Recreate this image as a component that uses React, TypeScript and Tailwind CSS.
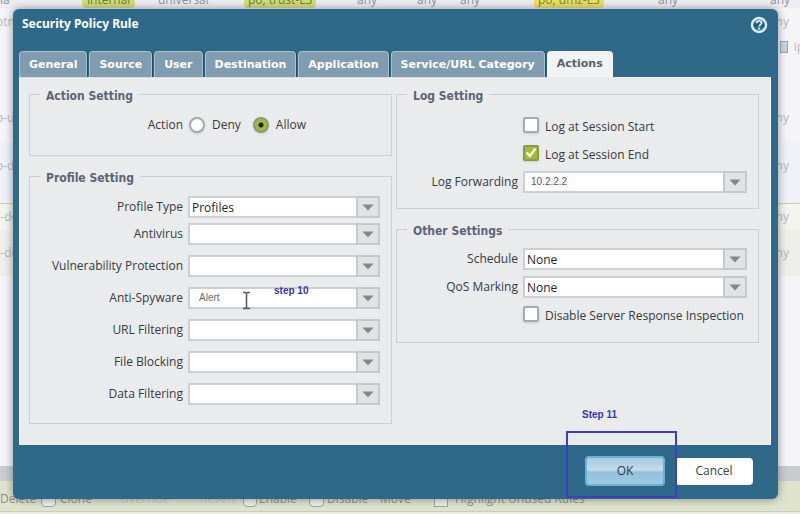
import type { ReactNode } from "react";

const labelFont = "font-['Open_Sans','Noto_Sans',sans-serif]";
const boldFont = "font-['Noto_Sans','Open_Sans',sans-serif] font-bold";
const legendFont = "font-['DejaVu_Sans_Condensed','DejaVu_Sans',sans-serif] font-bold";
const tabFont = "font-['DejaVu_Sans',sans-serif] font-bold";
const noteFont = "font-['Liberation_Sans',Arial,sans-serif]";

const tabs = ["General", "Source", "User", "Destination", "Application", "Service/URL Category", "Actions"];

function Group({ title, className, children }: { title: string; className: string; children: ReactNode }) {
  return (
    <fieldset className={`min-w-0 border border-[#cdd0d3] ${className}`}>
      <legend className={`ml-[10px] px-[6px] pt-1 text-[12px] leading-4 text-[#5c6475] ${legendFont}`}>{title}</legend>
      {children}
    </fieldset>
  );
}

type ComboProps = {
  id: string;
  label: string;
  value?: string;
  labelWidth: string;
  valueStyle?: string;
  children?: ReactNode;
};

function Combo({ id, label, value = "", labelWidth, valueStyle = "pl-[2px] pt-px text-[12px] text-[#22262b]", children }: ComboProps) {
  return (
    <div className="flex items-center gap-[5px] pr-[11px]">
      <label htmlFor={id} className={`shrink-0 whitespace-nowrap text-right ${labelWidth}`}>
        {label}
      </label>
      <div className="relative flex h-[22px] min-w-0 flex-1">
        <select
          id={id}
          defaultValue={value}
          className={`h-full w-full appearance-none rounded-none border-2 border-[#cdcfd2] bg-white ${valueStyle}`}
        >
          <option value={value}>{value}</option>
        </select>
        <span className="pointer-events-none absolute inset-y-0 right-0 flex w-6 items-center justify-center border-2 border-[#c6c8cb] bg-[#e0e2e4]">
          <svg width="12" height="7" viewBox="0 0 12 7" aria-hidden="true">
            <path d="M0.5 0.5h11L6 6.5z" fill="#83868a" />
          </svg>
        </span>
        {children}
      </div>
    </div>
  );
}

function Check({ id, label, checked = false }: { id: string; label: string; checked?: boolean }) {
  return (
    <div className="flex h-5 items-center gap-[6px] pl-[126px]">
      <span className="relative flex">
        <input
          id={id}
          type="checkbox"
          defaultChecked={checked}
          className="peer size-4 appearance-none rounded-xs border-2 border-[#a6a9ad] bg-white shadow-sm checked:border-[#8b9a4c] checked:bg-[#a3bd31]"
        />
        <svg
          className="pointer-events-none absolute inset-0 hidden peer-checked:block"
          width="16"
          height="16"
          viewBox="0 0 16 16"
          aria-hidden="true"
        >
          <path d="M3.5 7.5L6.8 11L12.5 3.5" fill="none" stroke="#fff" strokeWidth="2.2" />
        </svg>
      </span>
      <label htmlFor={id} className="whitespace-nowrap pt-[3px]">
        {label}
      </label>
    </div>
  );
}

function Radio({ id, label, checked = false }: { id: string; label: string; checked?: boolean }) {
  return (
    <span className="flex items-center gap-[7px]">
      <input
        id={id}
        type="radio"
        name="action"
        defaultChecked={checked}
        className="size-4 appearance-none rounded-full border-2 border-[#a6a8ab] bg-white shadow-sm checked:border-[#8f9872] checked:bg-[radial-gradient(circle,#1c2208_2px,#a2bb3c_3px)]"
      />
      <label htmlFor={id}>{label}</label>
    </span>
  );
}

function Cell({ width, children }: { width: string; children?: ReactNode }) {
  return <span className={`shrink-0 ${width}`}>{children}</span>;
}

function EdgeRow({ left, right, className }: { left?: string; right?: ReactNode; className: string }) {
  return (
    <div className={`flex shrink-0 items-center justify-between pr-[11px] ${className}`}>
      <span className="-ml-1">{left}</span>
      <span>{right}</span>
    </div>
  );
}

function Backdrop() {
  return (
    <div
      aria-hidden="true"
      className={`absolute inset-0 flex flex-col overflow-hidden bg-[#f5f5f8] text-[12px] leading-4 text-[#b4b6ba] ${labelFont}`}
    >
      <div className="flex h-2 shrink-0 items-end overflow-hidden whitespace-nowrap bg-[#eeeef2] text-[#8f9297]">
        <Cell width="w-[82px]">ia</Cell>
        <Cell width="w-[76px]">
          <span className="rounded-b bg-[#d3de79] px-[5px] text-[#727a35]">internal</span>
        </Cell>
        <Cell width="w-[86px]">universal</Cell>
        <Cell width="w-[113px]">
          <span className="rounded-b bg-[#d3de79] px-1 text-[#727a35]">po, trust-L3</span>
        </Cell>
        <Cell width="w-[60px]">any</Cell>
        <Cell width="w-[43px]">any</Cell>
        <Cell width="w-[74px]">any</Cell>
        <Cell width="w-[124px]">
          <span className="rounded-b bg-[#ebe15e] px-1 text-[#85803c]">po, dmz-L3</span>
        </Cell>
        <Cell width="w-[112px]">any</Cell>
        <Cell width="w-[30px]">any</Cell>
      </div>
      <EdgeRow className="h-[27px]" left="otn" right="any" />
      <div className="flex h-6 shrink-0 items-center justify-end gap-[6px]">
        <span className="h-3 w-2 border border-[#8fa9b5] bg-[#c4d6dc]" />
        <span className="-mr-1">ip</span>
      </div>
      <div className="h-[35px] shrink-0" />
      <EdgeRow className="h-12" left="o-u" right="any" />
      <EdgeRow className="h-12 bg-[#f0f1f8]" left="o-d" right="any" />
      <div className="h-[13px] shrink-0 bg-[#f0f1f8]" />
      <EdgeRow className="h-[27px] border-t border-[#cfd48c] bg-[#f3f4ee]" left="t-de" right="any" />
      <EdgeRow className="h-[46px] bg-[#eeefe8]" left="t-de" right="any" />
      <div className="flex-1" />
      <div className="h-[15px] shrink-0 bg-[#c9cbce]" />
      <div className="flex h-[31px] shrink-0 items-center whitespace-nowrap border-b border-[#c9ccc0] bg-[#dfe3cc] pt-[5px] text-[#8a8f80]">
        <Cell width="w-[41px]">Delete</Cell>
        <Cell width="w-[19px]">
          <span className="block h-4 w-[15px] rounded border border-[#9fa49a] bg-[#edf0e6]" />
        </Cell>
        <Cell width="w-[60px]">Clone</Cell>
        <Cell width="w-[80px]">
          <span className="text-[#c6cab6]">Override</span>
        </Cell>
        <Cell width="w-[43px]">
          <span className="text-[#c6cab6]">Revert</span>
        </Cell>
        <Cell width="w-[16px]">
          <span className="block h-4 w-[14px] rounded border border-[#9fa49a] bg-[#edf0e6]" />
        </Cell>
        <Cell width="w-[50px]">Enable</Cell>
        <Cell width="w-[18px]">
          <span className="block h-4 w-[15px] rounded border border-[#9fa49a] bg-[#edf0e6]" />
        </Cell>
        <Cell width="w-[53px]">Disable</Cell>
        <Cell width="w-[54px]">Move</Cell>
        <Cell width="w-[21px]">
          <span className="block h-4 w-[14px] border border-[#9fa49a] bg-[#edf0e6]" />
        </Cell>
        <Cell width="w-[130px]">Highlight Unused Rules</Cell>
      </div>
      <div className="h-[2px] shrink-0 bg-[#e9ebe4]" />
    </div>
  );
}

export default function App() {
  return (
    <div className="relative min-h-screen overflow-hidden pt-[9px] pr-[22px] pb-[15px] pl-[13px]">
      <Backdrop />
      <main
        role="dialog"
        aria-labelledby="dialog-title"
        className={`relative rounded-md bg-[#2f6989] shadow-[0_0_8px_rgba(60,70,80,0.6)] text-[12px] leading-4 text-[#363b42] ${labelFont}`}
      >
        <header className="flex h-[42px] items-start justify-between pt-[7px] pr-[10px] pl-[9px]">
          <h1 id="dialog-title" className={`text-[12px] leading-4 text-white ${boldFont}`}>
            Security Policy Rule
          </h1>
          <button type="button" aria-label="Help" className="flex">
            <svg width="18" height="18" viewBox="0 0 18 18" aria-hidden="true">
              <defs>
                <linearGradient id="help-fill" x1="0" y1="0" x2="0" y2="1">
                  <stop offset="0" stopColor="#6fa3c0" />
                  <stop offset="0.5" stopColor="#1d4f78" />
                  <stop offset="1" stopColor="#3f9fc4" />
                </linearGradient>
              </defs>
              <circle cx="9" cy="9" r="7" fill="url(#help-fill)" stroke="#d3eefa" strokeWidth="2.5" />
              <path
                d="M6.6 7.2C6.7 5.7 7.6 5 9 5c1.500 0 2.500.8 2.500 2 0 1.700-2.300 1.700-2.300 3.400"
                fill="none"
                stroke="#e6f5fb"
                strokeWidth="1.700"
              />
              <circle cx="9.100" cy="12.500" r="1.100" fill="#e6f5fb" />
            </svg>
          </button>
        </header>

        <nav role="tablist" className={`flex gap-[2px] pl-[6px] text-[11px] ${tabFont}`}>
          {tabs.map((tab) => {
            const active = tab === "Actions";
            return (
              <button
                key={tab}
                type="button"
                role="tab"
                aria-selected={active}
                className={
                  active
                    ? "h-[26px] rounded-t-[4px] bg-[#f1f3f5] px-[10px] text-[#5a5f68]"
                    : "h-[26px] rounded-t-[4px] border border-b-0 border-[#a9c0cf] bg-[#7f9cb1] px-[9px] text-white shadow-[1px_0_1px_#1f4a66]"
                }
              >
                {tab}
              </button>
            );
          })}
        </nav>

        <section className="mr-[7px] ml-[6px] grid grid-cols-2 items-start gap-1 border-x border-[#f5fafc] bg-[#eaebed] pt-[7px] pr-[11px] pb-[21px] pl-[9px]">
          <div className="flex flex-col gap-[10px]">
            <Group title="Action Setting" className="pb-5">
              <div className="flex h-[31px] items-center gap-[6px] pt-[11px]">
                <span className="w-[153px] text-right">Action</span>
                <div className="flex items-center gap-3">
                  <Radio id="deny" label="Deny" />
                  <Radio id="allow" label="Allow" checked />
                </div>
              </div>
            </Group>
            <Group title="Profile Setting" className="pb-[18px]">
              <div className="flex flex-col gap-[5px] pt-[10px]">
                <Combo id="profile-type" label="Profile Type" value="Profiles" labelWidth="w-[153px]" />
                <div className="flex flex-col gap-[10px]">
                  <Combo id="antivirus" label="Antivirus" labelWidth="w-[153px]" />
                  <Combo id="vulnerability" label="Vulnerability Protection" labelWidth="w-[153px]" />
                  <Combo
                    id="anti-spyware"
                    label="Anti-Spyware"
                    value="Alert"
                    labelWidth="w-[153px]"
                    valueStyle={`pl-[9px] text-[10px] text-[#6a6d70] ${noteFont}`}
                  >
                    <svg className="absolute top-1 left-[54px]" width="9" height="19" viewBox="0 0 9 19" aria-hidden="true">
                      <path
                        d="M1 1.500h2.500L4.500 2.500L5.500 1.500H8M4.500 2.500v14M1 17.500h2.500l1-1l1 1H8"
                        fill="none"
                        stroke="#55585c"
                        strokeWidth="1.500"
                      />
                    </svg>
                    <span
                      className={`absolute -top-[2px] left-[86px] text-[10px] leading-3 font-bold whitespace-nowrap text-[#3636b4] ${noteFont}`}
                    >
                      step 10
                    </span>
                  </Combo>
                  <Combo id="url-filtering" label="URL Filtering" labelWidth="w-[153px]" />
                  <Combo id="file-blocking" label="File Blocking" labelWidth="w-[153px]" />
                  <Combo id="data-filtering" label="Data Filtering" labelWidth="w-[153px]" />
                </div>
              </div>
            </Group>
          </div>

          <div className="flex flex-col gap-[10px]">
            <Group title="Log Setting" className="pb-[15px]">
              <div className="flex flex-col gap-2 pt-[11px]">
                <Check id="log-start" label="Log at Session Start" />
                <Check id="log-end" label="Log at Session End" checked />
                <Combo
                  id="log-forwarding"
                  label="Log Forwarding"
                  value="10.2.2.2"
                  labelWidth="w-[121px]"
                  valueStyle={`pl-[6px] text-[10px] text-[#55585c] ${noteFont}`}
                />
              </div>
            </Group>
            <Group title="Other Settings" className="pb-[18px]">
              <div className="flex flex-col gap-[6px] pt-[9px]">
                <Combo id="schedule" label="Schedule" value="None" labelWidth="w-[121px]" />
                <Combo id="qos" label="QoS Marking" value="None" labelWidth="w-[121px]" />
                <Check id="dsri" label="Disable Server Response Inspection" />
              </div>
            </Group>
          </div>
        </section>

        <footer className="flex h-[54px] items-center justify-end gap-[10px] pr-[25px] pb-[2px]">
          <div className="relative">
            <button
              type="button"
              className="block h-[30px] w-20 rounded-[4px] border-2 border-[#6fb0d0] bg-[linear-gradient(#a5cbe0,#c3dcea_45%,#94c0d8_55%,#9ccbe2)] text-[12px] text-[#2f3c46]"
            >
              OK
            </button>
            <span className="pointer-events-none absolute -top-[25px] -left-[19px] h-[67px] w-[111px] border-2 border-[#3e3fc0]" />
            <span
              className={`absolute -top-[47px] -left-[3px] text-[10px] leading-3 font-bold whitespace-nowrap text-[#3636b4] ${noteFont}`}
            >
              Step 11
            </span>
          </div>
          <button type="button" className="h-[27px] w-[78px] rounded-[4px] bg-white text-[12px] text-[#3c4045]">
            Cancel
          </button>
        </footer>
      </main>
    </div>
  );
}
